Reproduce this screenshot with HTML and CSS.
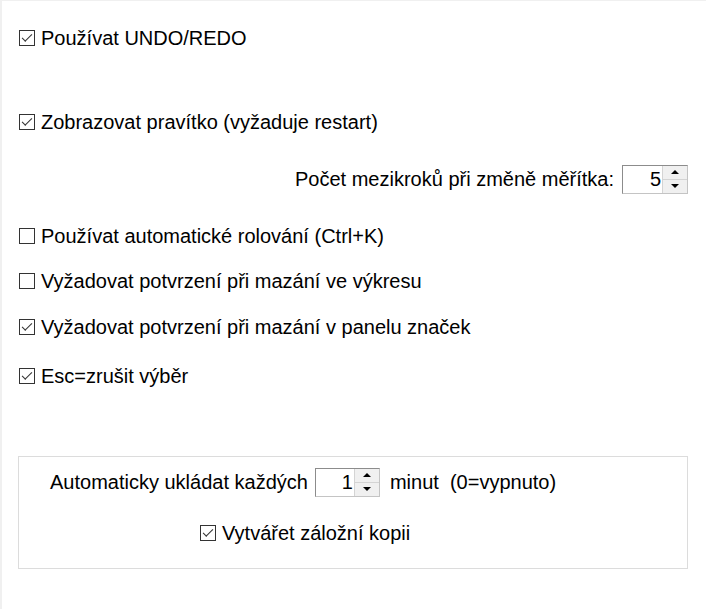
FILE: index.html
```html
<!DOCTYPE html>
<html lang="cs">
<head>
<meta charset="utf-8">
<link rel="stylesheet" href="styles.css">
</head>
<body>
<div class="page">
  <label class="cb r1"><span class="box on"></span>Používat UNDO/REDO</label>
  <label class="cb r2"><span class="box on"></span>Zobrazovat pravítko (vyžaduje restart)</label>
  <div class="spinrow r-spin">
    <span>Počet mezikroků při změně měřítka:</span>
    <span class="spin"><span class="val">5</span><span class="btns"><span class="up"></span><span class="dn"></span></span></span>
  </div>
  <label class="cb r3"><span class="box"></span>Používat automatické rolování (Ctrl+K)</label>
  <label class="cb r4"><span class="box"></span>Vyžadovat potvrzení při mazání ve výkresu</label>
  <label class="cb r5"><span class="box on"></span>Vyžadovat potvrzení při mazání v panelu značek</label>
  <label class="cb r6"><span class="box on"></span>Esc=zrušit výběr</label>
  <div class="group">
    <div class="autosave">
      <span>Automaticky ukládat každých</span>
      <span class="spin small"><span class="val">1</span><span class="btns"><span class="up"></span><span class="dn"></span></span></span>
      <span>minut&nbsp;&nbsp;(0=vypnuto)</span>
    </div>
    <label class="cb backup"><span class="box on"></span>Vytvářet záložní kopii</label>
  </div>
</div>
</body>
</html>
```
FILE: styles.css
```css
html, body {
  margin: 0;
  padding: 0;
  background: #fff;
}
.page {
  width: 704px;
  height: 608px;
  border-left: 2px solid #f0f0f0;
  border-top: 1px solid #f0f0f0;
  display: flex;
  flex-direction: column;
  font-family: "Liberation Sans", Arial, sans-serif;
  font-size: 20px;
  color: #000;
}
.cb {
  display: flex;
  align-items: center;
  height: 24px;
  line-height: 24px;
  margin-left: 17px;
}
.box {
  width: 14px;
  height: 14px;
  border: 1px solid #333;
  background: #fff;
  margin-right: 6px;
  position: relative;
  flex: none;
}
.box.on::after {
  content: "";
  position: absolute;
  left: 2px;
  top: 0px;
  width: 9px;
  height: 4px;
  border-left: 1.6px solid #333;
  border-bottom: 1.6px solid #333;
  transform: translate(0px, 3px) rotate(-45deg);
}
.r1 { margin-top: 25px; }
.r2 { margin-top: 60px; }
.r-spin {
  margin-top: 31px;
  align-self: flex-end;
  margin-right: 18px;
}
.r3 { margin-top: 30px; }
.r4 { margin-top: 21px; }
.r5 { margin-top: 22px; }
.r6 { margin-top: 25px; }
.spinrow, .autosave {
  display: flex;
  align-items: center;
}
.spin {
  display: flex;
  height: 27px;
  border: 1px solid #8c8c8c;
  border-right-color: #c4c4c4;
  border-bottom-color: #c4c4c4;
  margin-left: 8px;
  background: #fff;
}
.spin .val {
  width: 38px;
  text-align: right;
  padding-right: 1px;
  line-height: 27px;
}
.spin.small .val { width: 37px; }
.btns {
  width: 24px;
  display: flex;
  flex-direction: column;
  border-left: 1px solid #d4d4d4;
  background: #f0f0f0;
}
.btns span {
  flex: 1;
  position: relative;
}
.btns .up { border-bottom: 1px solid #d4d4d4; }
.btns .up::after, .btns .dn::after {
  content: "";
  position: absolute;
  left: 8px;
  border-left: 4px solid transparent;
  border-right: 4px solid transparent;
}
.btns .up::after { top: 4px; border-bottom: 4px solid #000; }
.btns .dn::after { top: 4px; border-top: 4px solid #000; }
.group {
  margin: 68px 0 0 16px;
  width: 670px;
  height: 113px;
  border: 1px solid #dcdcdc;
  box-sizing: border-box;
  display: flex;
  flex-direction: column;
}
.autosave {
  margin-left: 31px;
  margin-top: 11px;
}
.autosave .spin { margin-left: 7px; margin-right: 10px; }
.backup {
  margin-left: 181px;
  margin-top: 24px;
}
```
